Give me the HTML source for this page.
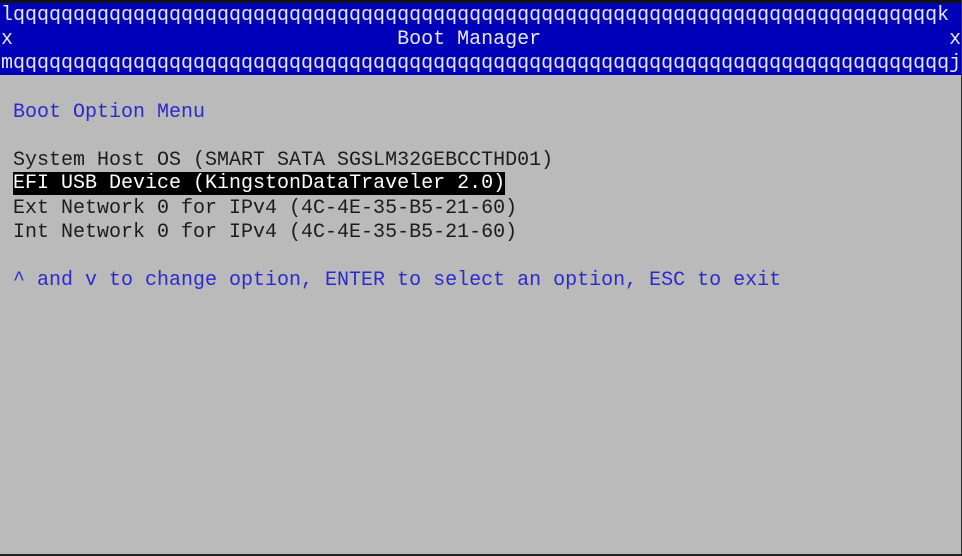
<!DOCTYPE html>
<html><head><style>
html,body{margin:0;padding:0;}
body{width:962px;height:556px;background:#bababa;position:relative;overflow:hidden;font-family:"Liberation Mono",monospace;font-size:20px;}
.top{position:absolute;left:0;top:0;width:962px;height:3px;background:#111;}
.hdr{position:absolute;left:0;top:3px;width:961px;height:72px;background:#0000b8;}
.r{position:absolute;left:1px;height:24px;line-height:24px;white-space:pre;letter-spacing:0;}
.w{color:#e8e8f8;}
.b{color:#2a2ad0;}
.k{color:#1c1c1c;}
.sel{background:#000;color:#fff;}
.rb{position:absolute;right:0;top:0;width:1px;height:556px;background:#333;}
.bb{position:absolute;left:0;bottom:0;width:962px;height:2px;background:#222;}
</style></head><body>
<div class="top"></div>
<div class="hdr"></div>
<div class="r w" style="top:4px">lqqqqqqqqqqqqqqqqqqqqqqqqqqqqqqqqqqqqqqqqqqqqqqqqqqqqqqqqqqqqqqqqqqqqqqqqqqqqqk</div>
<div class="r w" style="top:28px">x                                Boot Manager                                  x</div>
<div class="r w" style="top:52px">mqqqqqqqqqqqqqqqqqqqqqqqqqqqqqqqqqqqqqqqqqqqqqqqqqqqqqqqqqqqqqqqqqqqqqqqqqqqqqqj</div>
<div class="r b" style="top:101px"> Boot Option Menu</div>
<div class="r k" style="top:149px"> System Host OS (SMART SATA SGSLM32GEBCCTHD01)</div>
<div class="r k" style="top:172px"> <span class="sel">EFI USB Device (KingstonDataTraveler 2.0)</span></div>
<div class="r k" style="top:197px"> Ext Network 0 for IPv4 (4C-4E-35-B5-21-60)</div>
<div class="r k" style="top:221px"> Int Network 0 for IPv4 (4C-4E-35-B5-21-60)</div>
<div class="r b" style="top:269px"> ^ and v to change option, ENTER to select an option, ESC to exit</div>
<div class="rb"></div>
<div class="bb"></div>
</body></html>
